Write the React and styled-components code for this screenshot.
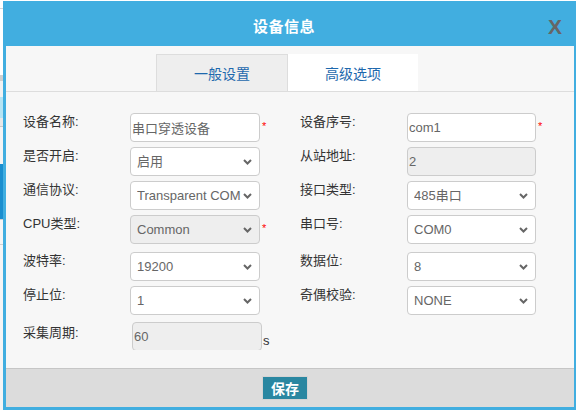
import React from 'react';
import styled, { createGlobalStyle } from 'styled-components';

const GlobalStyle = createGlobalStyle`
  html, body {
    margin: 0;
    padding: 0;
    background: #ffffff;
    overflow: hidden;
  }
  body {
    font-family: "Liberation Sans", "Noto Sans CJK SC", sans-serif;
    font-size: 13px;
    color: #333;
  }
  * {
    box-sizing: border-box;
  }
`;

const Page = styled.div`
  display: flex;
  width: 576px;
  height: 410px;
  overflow: hidden;
`;

// the page behind the modal, only a sliver of it shows on the left
const Backdrop = styled.div`
  width: 3px;
  flex-shrink: 0;
  display: flex;
  flex-direction: column;
`;

const Strip = styled.div`
  height: ${props => props.h}px;
  background: ${props => props.color};
`;

const Dialog = styled.div`
  width: 574px;
  height: 409px;
  margin-top: 1px;
  flex-shrink: 0;
  display: flex;
  flex-direction: column;
  border: 3px solid #41aee0;
  background: #f7f7f7;
`;

const Header = styled.div`
  height: 42px;
  flex-shrink: 0;
  display: grid;
  grid-template-columns: 1fr auto 1fr;
  align-items: center;
  padding-right: 12px;
  background: #41aee0;
`;

const Title = styled.div`
  grid-column: 2;
  color: #ffffff;
  font-size: 15px;
  font-weight: bold;
  letter-spacing: 0.5px;
`;

const Close = styled.div`
  grid-column: 3;
  justify-self: end;
  color: #666666;
  font-size: 21px;
  font-weight: bold;
  line-height: 1;
  margin-top: 2px;
  cursor: pointer;
`;

const TabBar = styled.div`
  height: 46px;
  flex-shrink: 0;
  display: flex;
  align-items: flex-end;
  padding-left: 150px;
  border-bottom: 1px solid #dddddd;
`;

const Tab = styled.div`
  width: ${props => (props.active ? 132 : 130)}px;
  height: 37px;
  display: flex;
  align-items: center;
  justify-content: center;
  font-size: 14px;
  color: #1d68ad;
  background: ${props => (props.active ? '#eeeeee' : '#ffffff')};
  border: 1px solid ${props => (props.active ? '#dddddd' : '#ffffff')};
  border-bottom: none;
`;

const Body = styled.div`
  height: 276px;
  flex-shrink: 0;
  padding: 21px 0 18px 17px;
  display: flex;
`;

const Scroll = styled.div`
  flex: 1;
  overflow: hidden;
`;

const Grid = styled.div`
  display: grid;
  grid-template-columns: 277px 277px;
  grid-template-rows: 34px 34px 34px 37px 34px 36px auto;
`;

const Field = styled.div`
  display: flex;
  align-items: flex-start;
`;

const Label = styled.label`
  width: ${props => (props.$shift ? 109 : 107)}px;
  flex-shrink: 0;
  line-height: 17px;
  padding-top: ${props => (props.$shift ? 2 : 0)}px;
  font-size: 13px;
  color: #333333;
`;

const TextInput = styled.input`
  width: ${props => props.w || 130}px;
  height: 29px;
  padding: 0 1px;
  border: 1px solid #cccccc;
  border-radius: 4px;
  font-family: inherit;
  font-size: 13px;
  color: #666666;
  background: ${props => (props.readOnly ? '#eeeeee' : '#ffffff')};
  outline: none;
`;

const SelectWrap = styled.div`
  position: relative;
  width: ${props => props.w || 130}px;
  height: 29px;
`;

const Select = styled.select`
  appearance: none;
  width: 100%;
  height: 100%;
  padding: 0 18px 0 6px;
  border: 1px solid #cccccc;
  border-radius: 4px;
  font-family: inherit;
  font-size: 13px;
  color: #666666;
  background: #ffffff;
  opacity: 1;
  outline: none;

  &:disabled {
    background: #eeeeee;
    color: #666666;
    opacity: 1;
  }
`;

const Chevron = styled.svg`
  position: absolute;
  right: 8px;
  top: 12px;
  width: 9px;
  height: 6px;
  pointer-events: none;
`;

const Required = styled.span`
  color: #ff0000;
  font-size: 11px;
  line-height: 11px;
  margin-left: 2px;
  margin-top: 8px;
`;

const Unit = styled.span`
  font-size: 13px;
  line-height: 17px;
  padding-top: 10px;
  margin-left: 1px;
  color: #333333;
`;

const Footer = styled.div`
  flex: 1;
  display: flex;
  align-items: center;
  justify-content: center;
  padding-right: 10px;
  background: #dcdcdc;
  border-top: 1px solid #c6c6c6;
`;

const SaveButton = styled.button`
  width: 46px;
  height: 24px;
  padding: 0;
  border: 1px solid #d4d4d4;
  background: #2a87a1;
  color: #ffffff;
  font-family: inherit;
  font-size: 14px;
  font-weight: bold;
  cursor: pointer;
`;

const DropDown = ({ value, options, disabled, w }) => (
  <SelectWrap w={w}>
    <Select defaultValue={value} disabled={disabled}>
      {options.map(o => (
        <option key={o} value={o}>
          {o}
        </option>
      ))}
    </Select>
    <Chevron viewBox="0 0 9 6">
      <path d="M1 1l3.5 3.5L8 1" fill="none" stroke="#666" strokeWidth="2" />
    </Chevron>
  </SelectWrap>
);

const backdrop = [
  ['#ffffff', 8],
  ['#d6d6d6', 1],
  ['#ffffff', 66],
  ['#cfcfcf', 6],
  ['#f2f2f2', 16],
  ['#b5e4f4', 21],
  ['#e8e8e8', 8],
  ['#c8c8c8', 1],
  ['#f4f4f4', 37],
  ['#1a8ecf', 55],
  ['#d0d0d0', 1],
  ['#f5f5f5', 24],
  ['#d0d0d0', 1],
  ['#f5f5f5', 165],
];

export default function App() {
  return (
    <>
      <GlobalStyle />
      <Page>
        <Backdrop>
          {backdrop.map(([color, h], i) => (
            <Strip key={i} color={color} h={h} />
          ))}
        </Backdrop>
        <Dialog>
          <Header>
            <Title>设备信息</Title>
            <Close>X</Close>
          </Header>
          <TabBar>
            <Tab active>一般设置</Tab>
            <Tab>高级选项</Tab>
          </TabBar>
          <Body>
            <Scroll>
              <Grid>
                <Field>
                  <Label>设备名称:</Label>
                  <TextInput defaultValue="串口穿透设备" />
                  <Required>*</Required>
                </Field>
                <Field>
                  <Label>设备序号:</Label>
                  <TextInput w={129} defaultValue="com1" />
                  <Required>*</Required>
                </Field>

                <Field>
                  <Label>是否开启:</Label>
                  <DropDown value="启用" options={['启用', '禁用']} />
                </Field>
                <Field>
                  <Label>从站地址:</Label>
                  <TextInput w={129} readOnly defaultValue="2" />
                </Field>

                <Field>
                  <Label>通信协议:</Label>
                  <DropDown value="Transparent COM" options={['Transparent COM', 'Modbus RTU']} />
                </Field>
                <Field>
                  <Label>接口类型:</Label>
                  <DropDown w={129} value="485串口" options={['485串口', '232串口']} />
                </Field>

                <Field>
                  <Label>CPU类型:</Label>
                  <DropDown disabled value="Common" options={['Common']} />
                  <Required>*</Required>
                </Field>
                <Field>
                  <Label>串口号:</Label>
                  <DropDown w={129} value="COM0" options={['COM0', 'COM1']} />
                </Field>

                <Field>
                  <Label>波特率:</Label>
                  <DropDown value="19200" options={['9600', '19200', '38400', '115200']} />
                </Field>
                <Field>
                  <Label>数据位:</Label>
                  <DropDown w={129} value="8" options={['7', '8']} />
                </Field>

                <Field>
                  <Label>停止位:</Label>
                  <DropDown value="1" options={['1', '2']} />
                </Field>
                <Field>
                  <Label>奇偶校验:</Label>
                  <DropDown w={129} value="NONE" options={['NONE', 'ODD', 'EVEN']} />
                </Field>

                <Field>
                  <Label $shift>采集周期:</Label>
                  <TextInput readOnly defaultValue="60" />
                  <Unit>s</Unit>
                </Field>
              </Grid>
            </Scroll>
          </Body>
          <Footer>
            <SaveButton>保存</SaveButton>
          </Footer>
        </Dialog>
      </Page>
    </>
  );
}
